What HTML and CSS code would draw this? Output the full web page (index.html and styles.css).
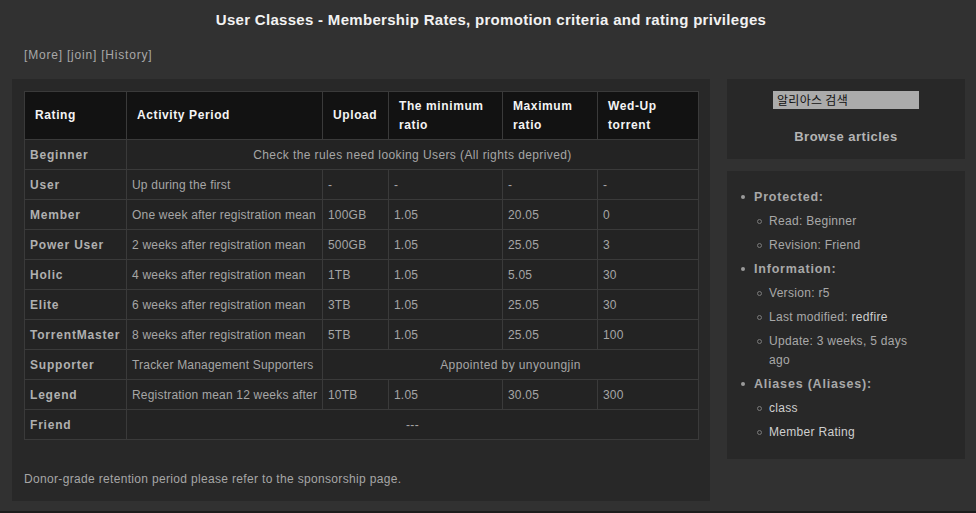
FILE: index.html
```html
<!DOCTYPE html>
<html>
<head>
<meta charset="utf-8">
<link rel="stylesheet" href="styles.css">
</head>
<body>
<h1 class="title">User Classes - Membership Rates, promotion criteria and rating privileges</h1>
<div class="links">[More] [join] [History]</div>
<div class="layout">
  <div class="panel">
    <table class="rates">
      <colgroup>
        <col class="c1"><col class="c2"><col class="c3"><col class="c4"><col class="c5"><col class="c6">
      </colgroup>
      <thead>
        <tr>
          <th>Rating</th>
          <th>Activity Period</th>
          <th>Upload</th>
          <th>The minimum<br>ratio</th>
          <th>Maximum<br>ratio</th>
          <th>Wed-Up<br>torrent</th>
        </tr>
      </thead>
      <tbody>
        <tr><td class="rk">Beginner</td><td colspan="5" class="ctr">Check the rules need looking Users (All rights deprived)</td></tr>
        <tr><td class="rk">User</td><td>Up during the first</td><td>-</td><td>-</td><td>-</td><td>-</td></tr>
        <tr><td class="rk">Member</td><td>One week after registration mean</td><td>100GB</td><td>1.05</td><td>20.05</td><td>0</td></tr>
        <tr><td class="rk">Power User</td><td>2 weeks after registration mean</td><td>500GB</td><td>1.05</td><td>25.05</td><td>3</td></tr>
        <tr><td class="rk">Holic</td><td>4 weeks after registration mean</td><td>1TB</td><td>1.05</td><td>5.05</td><td>30</td></tr>
        <tr><td class="rk">Elite</td><td>6 weeks after registration mean</td><td>3TB</td><td>1.05</td><td>25.05</td><td>30</td></tr>
        <tr><td class="rk">TorrentMaster</td><td>8 weeks after registration mean</td><td>5TB</td><td>1.05</td><td>25.05</td><td>100</td></tr>
        <tr><td class="rk">Supporter</td><td>Tracker Management Supporters</td><td colspan="4" class="ctr">Appointed by unyoungjin</td></tr>
        <tr><td class="rk">Legend</td><td>Registration mean 12 weeks after</td><td>10TB</td><td>1.05</td><td>30.05</td><td>300</td></tr>
        <tr><td class="rk">Friend</td><td colspan="5" class="ctr">---</td></tr>
      </tbody>
    </table>
    <p class="note">Donor-grade retention period please refer to the sponsorship page.</p>
  </div>
  <div class="side">
    <div class="box search">
      <div class="input">알리아스 검색</div>
      <div class="browse">Browse articles</div>
    </div>
    <div class="box info">
      <ul class="tree">
        <li><span class="lbl">Protected:</span>
          <ul>
            <li>Read: Beginner</li>
            <li>Revision: Friend</li>
          </ul>
        </li>
        <li><span class="lbl">Information:</span>
          <ul>
            <li>Version: r5</li>
            <li>Last modified: <span class="hl">redfire</span></li>
            <li>Update: 3 weeks, 5 days ago</li>
          </ul>
        </li>
        <li><span class="lbl">Aliases (Aliases):</span>
          <ul>
            <li class="hl">class</li>
            <li class="hl">Member Rating</li>
          </ul>
        </li>
      </ul>
    </div>
  </div>
</div>
<div class="bottom"></div>
</body>
</html>
```

FILE: styles.css
```css
html, body {
  margin: 0;
  padding: 0;
}
body {
  background: #313131;
  font-family: "Liberation Sans", Arial, sans-serif;
  font-size: 12px;
  letter-spacing: 0.4px;
  color: #a8a8a8;
  height: 513px;
  display: flex;
  flex-direction: column;
}
.title {
  margin: 0;
  height: 40px;
  line-height: 40px;
  text-align: center;
  font-size: 15px;
  font-weight: bold;
  letter-spacing: 0.3px;
  color: #f2f2f2;
  padding-left: 6px;
}
.links {
  padding-left: 24px;
  height: 30px;
  line-height: 30px;
  letter-spacing: 0.8px;
  color: #a8a8a8;
}
.layout {
  display: flex;
  gap: 17px;
  padding: 9px 11px 0 12px;
  align-items: flex-start;
}
.panel {
  width: 674px;
  padding: 12px;
  height: 398px;
  background: #282828;
}
.rates {
  border-collapse: collapse;
  table-layout: fixed;
  width: 674px;
}
.c1 { width: 102px; }
.c2 { width: 196px; }
.c3 { width: 66px; }
.c4 { width: 114px; }
.c5 { width: 95px; }
.c6 { width: 101px; }
.rates th, .rates td {
  border: 1px solid #3a3a3a;
  text-align: left;
  white-space: nowrap;
}
.rates th {
  background: #121212;
  color: #f4f4f4;
  font-weight: bold;
  letter-spacing: 0.6px;
  height: 47px;
  line-height: 19px;
  padding: 0 10px;
}
.rates td {
  background: #232323;
  height: 29px;
  padding: 0 5px;
  color: #a6a6a6;
  letter-spacing: 0.2px;
}
.rates td.rk {
  font-weight: bold;
  letter-spacing: 0.8px;
  color: #b0b0b0;
}
.rates td.ctr {
  text-align: center;
  letter-spacing: 0.4px;
}
.note {
  margin: 32px 0 0;
  color: #a6a6a6;
  letter-spacing: 0.33px;
}
.side {
  width: 238px;
  display: flex;
  flex-direction: column;
  gap: 12px;
}
.box {
  background: #282828;
}
.search {
  height: 80px;
  display: flex;
  flex-direction: column;
  align-items: center;
}
.input {
  margin-top: 12px;
  width: 142px;
  height: 18px;
  line-height: 18px;
  background: #ababab;
  color: #111;
  padding-left: 4px;
  font-family: "Noto Sans CJK KR", sans-serif;
  font-size: 12px;
  letter-spacing: 0.3px;
}
.browse {
  margin-top: 20px;
  font-weight: bold;
  font-size: 13px;
  letter-spacing: 0.5px;
  color: #b4b4b4;
}
.info {
  height: 288px;
}
.tree {
  list-style: none;
  margin: 0;
  padding: 14px 0 0 27px;
  line-height: 24px;
  letter-spacing: 0.3px;
}
.tree li {
  position: relative;
}
.tree > li::before {
  content: "";
  position: absolute;
  left: -13px;
  top: 10px;
  width: 4px;
  height: 4px;
  background: #9a9a9a;
  border-radius: 50%;
}
.lbl {
  font-weight: bold;
  color: #a8a8a8;
  font-size: 12.5px;
  letter-spacing: 0.8px;
}
.tree ul {
  list-style: none;
  margin: 0;
  padding: 0 0 0 15px;
}
.tree ul li {
  line-height: 24px;
  width: 150px;
}
.tree ul li:nth-child(3) {
  line-height: 19px;
  padding: 3px 0 2px;
}
.tree ul li::before {
  content: "";
  position: absolute;
  left: -12px;
  top: 10px;
  width: 3px;
  height: 3px;
  border: 1px solid #7a7a7a;
  border-radius: 50%;
}
.hl {
  color: #cfcfcf;
}
.bottom {
  margin-top: auto;
  height: 2px;
  background: #1c1c1c;
}
```
